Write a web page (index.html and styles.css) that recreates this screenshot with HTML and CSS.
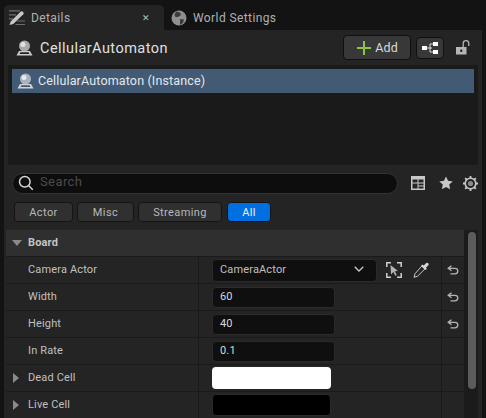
FILE: index.html
```html
<!DOCTYPE html>
<html lang="en">
<head>
  <title>Details</title>
  <meta charset="utf-8">
  <link rel="stylesheet" href="styles.css">
</head>
<body>
  <div class="tabs">
    <div class="tab active">
      <svg class="tab-icon" width="16" height="16" viewBox="0 0 16 16">
        <path d="M0 .8h11M0 4.800h7M0 8.800h4M8 11h8M6.500 14.500h9.500" stroke="#6e6e6e" stroke-width="1.200" fill="none"/>
        <path d="M.5 15l1.200-3.500L11.500 1.800q1.300-1 2.500 0t.3 2.500L4.300 14z" fill="#c8c8c8"/>
      </svg>
      <span class="tab-label">Details</span>
      <span class="tab-close">✕</span>
    </div>
    <div class="tab">
      <svg class="tab-icon" width="16" height="16" viewBox="0 0 16 16">
        <circle cx="8" cy="8" r="7.500" fill="#8f8f8f"/>
        <path d="M5 1.500l4 1 1 2.500-3 2-2.500 0-1-2zM9 9l4 .5-1 3.500-3 2z" fill="#3a3a3a"/>
      </svg>
      <span class="tab-label">World Settings</span>
    </div>
  </div>

  <div class="panel">
    <div class="main">
      <div class="title-row">
        <svg class="actor-icon" width="17" height="16" viewBox="0 0 17 16">
          <circle cx="8.500" cy="6" r="5.500" fill="#a9a9a9"/>
          <circle cx="7" cy="4.500" r="2.500" fill="#e2e2e2"/>
          <path d="M3 11h11l2.500 4.500H.5zM3.500 14h10l-1-1.700H4.500z" fill="#c9c9c9" fill-rule="evenodd"/>
        </svg>
        <span class="actor-name">CellularAutomaton</span>
        <button class="add-btn">
          <svg width="14" height="14" viewBox="0 0 14 14"><path d="M7 0v14M0 7h14" stroke="#8bc24a" stroke-width="2"/></svg>
          Add
        </button>
        <button class="tree-btn">
          <svg width="16" height="12" viewBox="0 0 16 12">
            <path d="M5 6h5M8 2v8M8 2h3M8 10h3" stroke="#dcdcdc" fill="none"/>
            <rect x="0" y="4" width="5" height="4" fill="#fff"/>
            <rect x="11" y="0" width="5" height="4" fill="#fff"/>
            <rect x="11" y="8" width="5" height="4" fill="#fff"/>
          </svg>
        </button>
        <svg class="lock" width="14" height="15" viewBox="0 0 14 15">
          <path d="M0 7h10.500v7.500H0zM4.300 9.500v2.500h2V9.500z" fill="#b5b5b5" fill-rule="evenodd"/>
          <path d="M7.200 7V3.500a2.800 2.800 0 0 1 5.600 0V6" stroke="#b5b5b5" stroke-width="1.300" fill="none"/>
        </svg>
      </div>

      <div class="actor-list">
        <div class="actor-row">
          <svg width="17" height="16" viewBox="0 0 17 16">
            <circle cx="8.500" cy="6" r="5.500" fill="#a9b2bd"/>
            <circle cx="7" cy="4.500" r="2.500" fill="#e6e9ec"/>
            <path d="M3 11h11l2.500 4.500H.5zM3.500 14h10l-1-1.700H4.500z" fill="#cfd4da" fill-rule="evenodd"/>
          </svg>
          <span class="actor-row-text">CellularAutomaton (Instance)</span>
        </div>
      </div>

      <div class="search-row">
        <div class="search">
          <svg width="16" height="16" viewBox="0 0 16 16">
            <circle cx="6.800" cy="6.800" r="5.300" stroke="#d8d8d8" stroke-width="1.500" fill="none"/>
            <path d="M10.800 10.800l4 4" stroke="#d8d8d8" stroke-width="1.500"/>
          </svg>
          <span class="search-text">Search</span>
        </div>
        <svg class="tool" width="14" height="14" viewBox="0 0 14 14">
          <path d="M0 0h14v14H0zM1.500 3.500v3h5v-3zM7.500 3.500v3h5v-3zM1.500 7.500v5h5v-5zM7.500 7.500v2h5v-2zM7.500 10.500v2h5v-2z" fill="#c8c8c8" fill-rule="evenodd"/>
        </svg>
        <svg class="tool" width="14" height="14" viewBox="0 0 14 14">
          <path d="M7 .5l2 4.300 4.700.6-3.500 3.200.9 4.700L7 11l-4.100 2.300.9-4.700L.3 5.400 5 4.800z" fill="#c8c8c8"/>
        </svg>
        <svg class="tool" width="15" height="15" viewBox="0 0 15 15">
          <circle cx="7.500" cy="7.500" r="5.300" stroke="#c8c8c8" stroke-width="1.600" fill="none"/>
          <circle cx="7.500" cy="7.500" r="2.600" fill="#8a8a8a"/>
          <path d="M7.500 0v2.500M7.500 12.500V15M0 7.500h2.500M12.500 7.500H15M2.200 2.200L4 4M11 11l1.800 1.800M12.800 2.200L11 4M4 11l-1.800 1.800" stroke="#c8c8c8" stroke-width="1.800"/>
        </svg>
      </div>

      <div class="filters">
        <button class="filter f-actor">Actor</button>
        <button class="filter f-misc">Misc</button>
        <button class="filter f-streaming">Streaming</button>
        <button class="filter f-all">All</button>
      </div>

      <div class="details">
        <div class="props">
          <div class="section">
            <svg width="10" height="6" viewBox="0 0 10 6"><path d="M0 0h10L5 6z" fill="#8a8a8a"/></svg>
            <span class="section-text">Board</span>
          </div>

          <div class="prop">
            <div class="prop-name">Camera Actor</div>
            <div class="prop-value">
              <div class="dropdown">
                <span>CameraActor</span>
                <svg width="10" height="6" viewBox="0 0 10 6"><path d="M.7.7L5 5l4.300-4.300" stroke="#c8c8c8" stroke-width="1.300" fill="none"/></svg>
              </div>
              <svg class="pick" width="16" height="16" viewBox="0 0 16 16">
                <path d="M.8 5V.8H5M11 .8h4.200V5M15.200 11v4.200H11M5 15.200H.8V11" stroke="#d0d0d0" stroke-width="1.500" fill="none"/>
                <path d="M4.500 3l7.500 6-3.200.3 2 3.700-1.500.8-1.900-3.700L5 12.500z" fill="#b4b4b4"/>
              </svg>
              <svg class="dropper" width="16" height="16" viewBox="0 0 16 16">
                <path d="M9 3.800l3 3-7.500 7.500-3.500 1 1-3.500z" stroke="#c8c8c8" fill="none"/>
                <path d="M8 4l1.500-1.500 1.200 1L13 1.200q1.200-1 2.200 0t0 2.200l-2.300 2.300 1 1.200L12.200 8z" fill="#d6d6d6"/>
              </svg>
            </div>
            <div class="prop-reset"><svg width="12" height="10" viewBox="0 0 12 10"><use href="#undo"/></svg></div>
          </div>

          <div class="prop">
            <div class="prop-name">Width</div>
            <div class="prop-value"><div class="num">60</div></div>
            <div class="prop-reset"><svg width="12" height="10" viewBox="0 0 12 10"><use href="#undo"/></svg></div>
          </div>

          <div class="prop">
            <div class="prop-name">Height</div>
            <div class="prop-value"><div class="num">40</div></div>
            <div class="prop-reset"><svg width="12" height="10" viewBox="0 0 12 10"><use href="#undo"/></svg></div>
          </div>

          <div class="prop">
            <div class="prop-name">In Rate</div>
            <div class="prop-value"><div class="num">0.1</div></div>
            <div class="prop-reset"></div>
          </div>

          <div class="prop">
            <div class="prop-name has-arrow">
              <svg width="6" height="10" viewBox="0 0 6 10"><path d="M0 0l6 5-6 5z" fill="#8a8a8a"/></svg>
              <span>Dead Cell</span>
            </div>
            <div class="prop-value"><div class="swatch white"></div></div>
            <div class="prop-reset"></div>
          </div>

          <div class="prop">
            <div class="prop-name has-arrow">
              <svg width="6" height="10" viewBox="0 0 6 10"><path d="M0 0l6 5-6 5z" fill="#8a8a8a"/></svg>
              <span>Live Cell</span>
            </div>
            <div class="prop-value"><div class="swatch black"></div></div>
            <div class="prop-reset"></div>
          </div>
        </div>

        <div class="scroll"><div class="thumb"></div></div>
      </div>
    </div>
  </div>

  <svg width="0" height="0" class="defs">
    <symbol id="undo" viewBox="0 0 12 10">
      <path d="M4.500 .8L1.200 3.300l3.300 2.500M1.500 3.300h6.500a2.800 2.800 0 0 1 0 5.600H3.500" stroke="#b4b4b4" stroke-width="1.300" fill="none"/>
    </symbol>
  </svg>
</body>
</html>
```

FILE: styles.css
```css
body {
  margin: 0;
  width: 486px;
  height: 418px;
  overflow: hidden;
  background-color: #131313;
  font-family: Roboto, "Liberation Sans", sans-serif;
  font-size: 11px;
  letter-spacing: 0.15px;
  color: #c0c0c0;
}
button {
  font-family: inherit;
  letter-spacing: inherit;
  padding: 0;
}
.defs {
  position: absolute;
}

/* tab strip */
.tabs {
  display: flex;
  height: 25px;
  padding: 5px 0 0 4px;
}
.tab {
  display: flex;
  align-items: center;
  font-size: 12px;
  letter-spacing: 0.4px;
  color: #b0b0b0;
  padding-left: 7px;
  gap: 6px;
}
.tab.active {
  width: 160px;
  box-sizing: border-box;
  padding-left: 5px;
  padding-right: 14px;
  background-color: #242424;
  border-radius: 5px 5px 0 0;
}
.tab-label {
  flex: 1;
}
.tab-close {
  font-size: 9px;
  color: #c0c0c0;
}

/* panel */
.panel {
  height: 388px;
  padding: 0 4px;
}
.main {
  height: 388px;
  background-color: #242424;
}

.title-row {
  display: flex;
  align-items: center;
  height: 35px;
  padding-left: 12px;
  padding-right: 12px;
}
.actor-name {
  flex: 1;
  margin-left: 7px;
  padding-top: 2px;
  font-size: 14.5px;
  letter-spacing: 0.45px;
  color: #e0e0e0;
}
.add-btn {
  display: flex;
  align-items: center;
  justify-content: center;
  gap: 4px;
  width: 68px;
  height: 25px;
  padding-left: 1px;
  font-size: 12.5px;
  color: #d8d8d8;
  background-color: #383838;
  border: 1px solid #101010;
  border-radius: 4px;
}
.tree-btn {
  display: flex;
  align-items: center;
  justify-content: center;
  width: 28px;
  height: 22px;
  margin-left: 5px;
  background-color: #383838;
  border: 1px solid #101010;
  border-radius: 4px;
}
.lock {
  margin-left: 12px;
}

.actor-list {
  height: 92px;
  margin: 0 4px;
  padding: 4px;
  background-color: #1a1a1a;
}
.actor-row {
  display: flex;
  align-items: center;
  gap: 4px;
  height: 24px;
  padding-left: 5px;
  font-size: 12.5px;
  letter-spacing: 0.15px;
  color: #e4e8ec;
  background-color: #425a74;
}
.actor-row-text {
  padding-bottom: 2px;
}

.search-row {
  display: flex;
  align-items: center;
  height: 22px;
  margin-top: 7px;
  padding-left: 8px;
}
.search {
  display: flex;
  align-items: center;
  gap: 6px;
  box-sizing: border-box;
  width: 386px;
  height: 21px;
  padding-left: 5px;
  margin-right: 13px;
  font-size: 13px;
  letter-spacing: 0.4px;
  color: #4c4c4c;
  background-color: #0d0d0d;
  border: 1px solid #343434;
  border-radius: 11px;
}
.search-text {
  padding-bottom: 4px;
}
.tool {
  margin-right: 14px;
}
.tool:last-child {
  margin-right: 0;
  margin-left: -4px;
}

.filters {
  display: flex;
  gap: 4px;
  height: 20px;
  margin-top: 8px;
  padding-left: 10px;
}
.filter {
  height: 20px;
  font-size: 11px;
  letter-spacing: 0.4px;
  color: #b8b8b8;
  background-color: #303030;
  border: 1px solid #141414;
  border-radius: 4px;
}
.f-actor { width: 59px; }
.f-misc { width: 57px; }
.f-streaming { width: 84px; }
.f-all {
  width: 44px;
  margin-left: 1px;
  color: #f0f0f0;
  background-color: #0070e0;
}

.details {
  display: flex;
  margin-top: 8px;
  padding-left: 2px;
}
.props {
  width: 458px;
}
.section {
  display: flex;
  align-items: center;
  gap: 6px;
  height: 26px;
  padding-left: 6px;
  font-weight: 700;
  color: #c4c4c4;
  background-color: #2f2f2f;
  border-bottom: 1px solid #1a1a1a;
}
.section-text {
  padding-bottom: 2px;
}
.prop {
  display: grid;
  grid-template-columns: 192px 243px 23px;
  height: 26px;
  border-bottom: 1px solid #1a1a1a;
}
.prop-name {
  display: flex;
  align-items: center;
  padding-left: 22px;
  padding-bottom: 2px;
}
.prop-name.has-arrow {
  padding-left: 7px;
  gap: 9px;
}
.prop-name svg {
  margin-top: 2px;
}
.prop-value {
  display: flex;
  align-items: center;
  padding-left: 13px;
  border-left: 1px solid #1a1a1a;
}
.prop-reset {
  display: flex;
  align-items: center;
  justify-content: center;
  padding-right: 1px;
  border-left: 1px solid #1a1a1a;
}
.dropdown {
  display: flex;
  align-items: center;
  justify-content: space-between;
  box-sizing: border-box;
  width: 165px;
  height: 23px;
  padding: 0 12px 2px 7px;
  background-color: #0f0f0f;
  border: 1px solid #2a2a2a;
  border-radius: 4px;
}
.pick {
  margin-left: 9px;
}
.dropper {
  margin-left: 11px;
}
.num {
  display: flex;
  align-items: center;
  box-sizing: border-box;
  width: 123px;
  height: 21px;
  padding: 0 0 2px 7px;
  color: #d8d8d8;
  background-color: #0f0f0f;
  border: 1px solid #2a2a2a;
  border-radius: 4px;
}
.swatch {
  box-sizing: border-box;
  width: 119px;
  height: 22px;
  border-radius: 4px;
}
.swatch.white {
  background-color: #fff;
}
.swatch.black {
  background-color: #000;
  border: 1px solid #2a2a2a;
}

.scroll {
  width: 14px;
  height: 188px;
  padding: 2px 0 0 4px;
  box-sizing: border-box;
  background-color: #1b1b1b;
}
.thumb {
  width: 8px;
  height: 157px;
  background-color: #5c5c5c;
  border-radius: 4px;
}
```
